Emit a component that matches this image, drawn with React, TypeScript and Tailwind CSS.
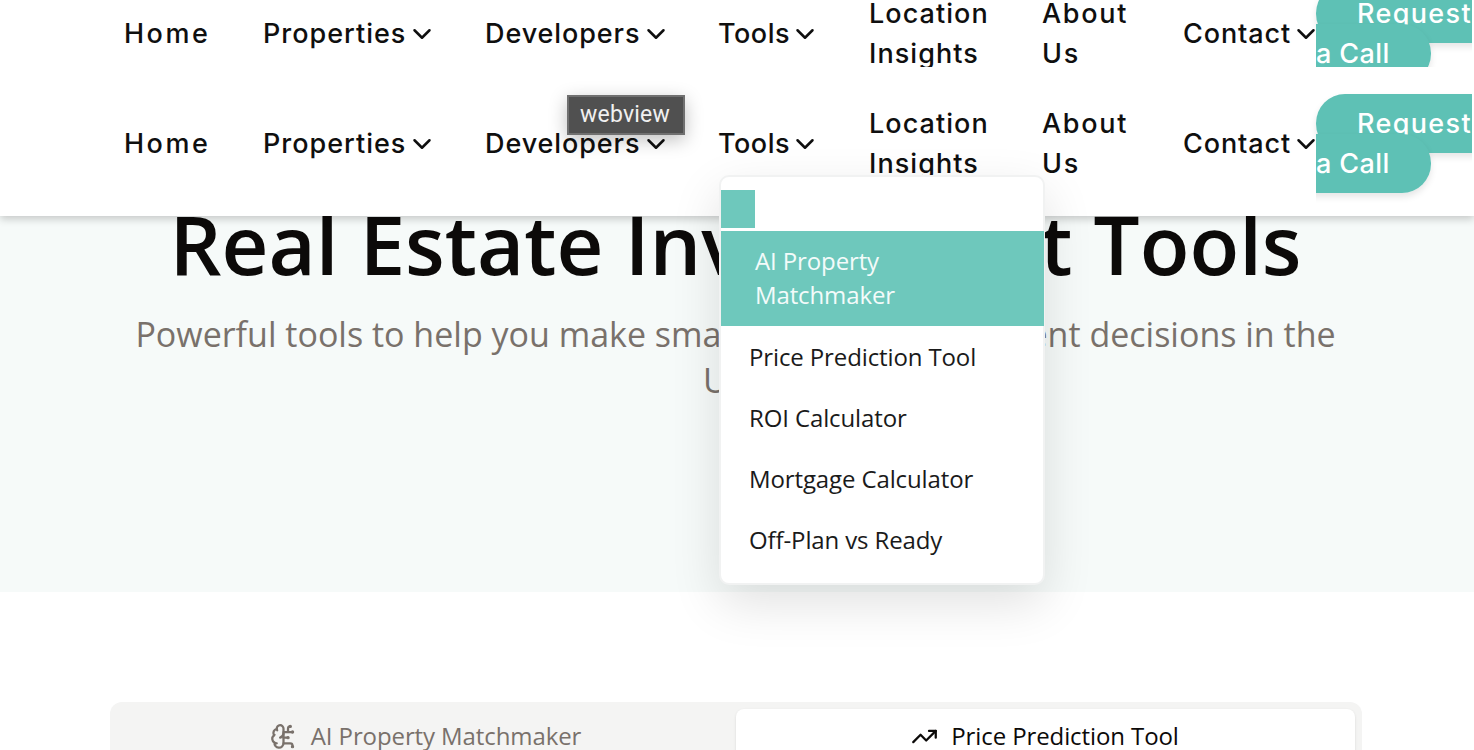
import { BrainCircuit, ChevronDown, TrendingUp } from "lucide-react";
import type { ReactNode } from "react";

function NavItem({ width, label, track, menu = false, children }: { width: string; label: ReactNode; track: string; menu?: boolean; children?: ReactNode }) {
  return (
    <li className={`relative flex shrink-0 items-center ${width}`}>
      <span className={track}>{label}</span>
      {menu && <ChevronDown className="-mr-[4px] ml-auto h-[30px] w-[30px] shrink-0" strokeWidth={2} />}
      {children}
    </li>
  );
}

function Nav({ children }: { children?: ReactNode }) {
  return (
    <ul className="flex items-center pl-[124px] font-['Inter',sans-serif] text-[27px] leading-[40px] font-medium whitespace-nowrap text-[#0f0f0f]">
      <NavItem width="w-[139px]" label="Home" track="tracking-[2.5px]" />
      <NavItem width="w-[170px] mr-[52px]" label="Properties" track="tracking-[1px]" menu />
      <NavItem width="w-[182px] mr-[51px]" label="Developers" track="tracking-[0.9px]" menu />
      <NavItem width="w-[98px] mr-[53px]" label="Tools" track="tracking-[0.5px]" menu>
        {children}
      </NavItem>
      <NavItem width="w-[173px]" label={<>Location<br />Insights</>} track="tracking-[1.05px]" />
      <NavItem width="w-[141px]" label={<>About<br />Us</>} track="tracking-[1.7px]" />
      <NavItem width="w-[133px]" label="Contact" track="tracking-[0.9px]" menu />
      <li className="w-[158px] shrink-0">
        <a className="rounded-[29px] bg-[#5ec1b5] px-[41px] py-[13px] text-white shadow-[0_4px_7px_rgba(0,0,0,0.1)]">
          <span className="tracking-[1.35px]">Request</span><br /><span className="tracking-[0.4px]">a Call</span>
        </a>
      </li>
    </ul>
  );
}

const tools = ["Price Prediction Tool", "ROI Calculator", "Mortgage Calculator", "Off-Plan vs Ready"];

function ToolsMenu() {
  return (
    <div className="absolute top-[51px] left-px z-20 h-[410px] w-[326px] rounded-[10px] border-2 border-[#f1f2f2] bg-white pt-[13px] font-['Open_Sans',sans-serif] text-[24px] leading-[34px] font-normal tracking-[-0.12px] shadow-[0_18px_50px_rgba(0,0,0,0.12)]">
      <div className="h-[38px] w-[34px] bg-[#6ec8bc]" />
      <div className="mt-[3px] -mr-px h-[95px] bg-[#6ec8bc] pt-[13px] pl-[34px] text-[#f3fbfa]">
        AI Property<br />Matchmaker
      </div>
      {tools.map((tool) => (
        <div key={tool} className="flex h-[61px] items-center pl-[28px] text-[#1a1a1a]">{tool}</div>
      ))}
    </div>
  );
}

export default function App() {
  return (
    <div className="h-[750px] w-full overflow-hidden bg-white font-['Open_Sans',sans-serif]">
      <header className="relative z-10 h-[216px] bg-white shadow-[0_3px_8px_rgba(0,0,0,0.2)]">
        <div className="flex h-[67px] items-center overflow-hidden pt-px">
          <Nav />
        </div>
        <div className="relative flex h-[149px] items-center pt-[5px]">
          <Nav>
            <ToolsMenu />
          </Nav>
          <div className="absolute top-[28px] left-[567px] z-30 flex h-[40px] w-[118px] items-center justify-center border-2 border-[#707070] bg-[#505050] pr-[2px] font-['Roboto',sans-serif] text-[23px] tracking-[0.2px] text-[#f0f0f0] shadow-[0_5px_18px_rgba(0,0,0,0.25)]">
            webview
          </div>
        </div>
      </header>
      <section className="h-[376px] overflow-hidden bg-[#f6faf9] pr-[3px] text-center">
        <h1 className="-mt-[14px] text-[81.5px] leading-[84px] font-semibold whitespace-nowrap text-[#0c0a09]">Real Estate Investment Tools</h1>
        <p className="mx-auto mt-[25px] text-[34px] leading-[46px] whitespace-nowrap text-[#79716b]">
          Powerful tools to help you make smart property investment decisions in the<br />UAE
        </p>
      </section>
      <main className="pt-[110px] pl-[110px]">
        <div className="grid h-[80px] w-[1252px] grid-cols-2 rounded-[12px] bg-[#f4f4f3] p-[7px] text-[24px] tracking-[-0.1px]">
          <div className="flex h-[54px] items-center justify-center gap-[14px] pr-[2px] text-[#79716b]">
            <BrainCircuit className="h-[27px] w-[27px]" strokeWidth={2} />
            <span>AI Property Matchmaker</span>
          </div>
          <div className="flex h-[66px] items-start justify-center gap-[13px] rounded-[8px] bg-white pt-[9px] pr-px text-[#0c0a09] shadow-sm">
            <TrendingUp className="mt-[5px] h-[27px] w-[27px]" strokeWidth={2} />
            <span>Price Prediction Tool</span>
          </div>
        </div>
      </main>
    </div>
  );
}
